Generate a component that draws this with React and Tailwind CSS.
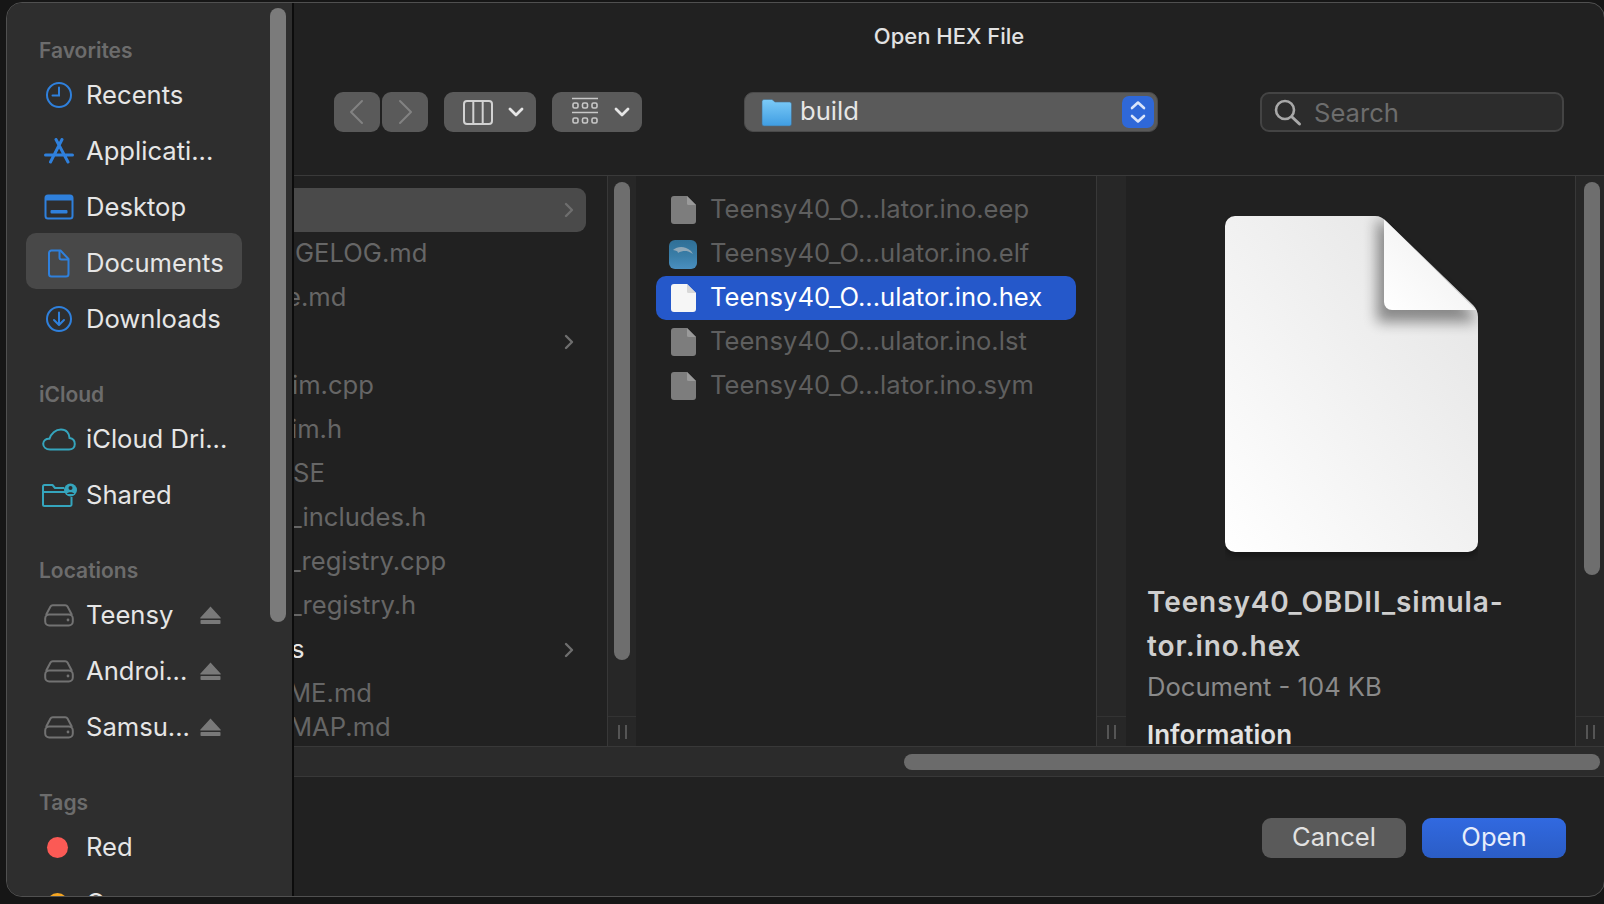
import React from "react";

const BLUE = "#2f80dc";
const TEAL = "#35a5bd";
const GRAY = "#727272";

const Clock = () => (
  <svg width="28" height="28" viewBox="0 0 28 28" fill="none" stroke={BLUE} strokeWidth="2">
    <circle cx="14" cy="14" r="12" />
    <path d="M14 6.5V14.5H7.5" strokeLinecap="round" />
  </svg>
);
const AppStore = () => (
  <svg width="30" height="26" viewBox="0 0 30 26" fill="none" stroke={BLUE} strokeWidth="3" strokeLinecap="round">
    <path d="M12 1.5L24 24M18 1.5L6.5 24M1.5 17H28.5" />
  </svg>
);
const DesktopIcon = () => (
  <svg width="30" height="26" viewBox="0 0 30 26" fill="none" stroke={BLUE} strokeWidth="2">
    <rect x="1.5" y="1.5" width="27" height="23" rx="2.5" />
    <rect x="2" y="2" width="26" height="4.5" fill={BLUE} stroke="none" />
    <rect x="6.5" y="16" width="17" height="3.5" rx="1" fill={BLUE} stroke="none" />
  </svg>
);
const DocIcon = () => (
  <svg width="22" height="29" viewBox="0 0 22 29" fill="none" stroke={BLUE} strokeWidth="2" strokeLinejoin="round">
    <path d="M3.5 1.5H12.5L20.5 10V25a2.5 2.5 0 0 1-2.5 2.5H3.5A2.5 2.5 0 0 1 1 25V4A2.5 2.5 0 0 1 3.5 1.5Z" />
    <path d="M11.5 1.5V8.5a2 2 0 0 0 2 2H20.5" />
  </svg>
);
const DownloadIcon = () => (
  <svg width="28" height="28" viewBox="0 0 28 28" fill="none" stroke={BLUE} strokeWidth="2" strokeLinecap="round" strokeLinejoin="round">
    <circle cx="14" cy="14" r="12" />
    <path d="M14 7.5V19.5M9 15L14 20L19 15" />
  </svg>
);
const CloudIcon = () => (
  <svg width="34" height="23" viewBox="0 0 34 23" fill="none" stroke={TEAL} strokeWidth="2">
    <path d="M8 21.5C4 21.5 1.2 19 1.2 15.8C1.2 12.5 4 10.5 7.5 10.8C9 5.5 13.5 1.5 19 1.5C24.5 1.5 27.5 5.5 27.5 10C31 10.5 32.8 13 32.8 16C32.8 19.2 30.5 21.5 27 21.5Z" />
  </svg>
);
const SharedIcon = () => (
  <svg width="35" height="24" viewBox="0 0 35 24" fill="none" stroke={TEAL} strokeWidth="2" strokeLinejoin="round">
    <path d="M22 5H13L10.5 2H2.5A1.5 1.5 0 0 0 1 3.5V21.5A1.5 1.5 0 0 0 2.5 23H28A1.5 1.5 0 0 0 29.5 21.5V14" />
    <path d="M1 9H24" />
    <circle cx="28.5" cy="7" r="6.5" fill={TEAL} stroke="none" />
    <circle cx="28.5" cy="5" r="2" fill="#2e2e2e" stroke="none" />
    <path d="M24.8 11C25.3 8.8 31.7 8.8 32.2 11Z" fill="#2e2e2e" stroke="none" />
  </svg>
);
const DriveIcon = () => (
  <svg width="30" height="23" viewBox="0 0 30 23" fill="none" stroke={GRAY} strokeWidth="2" strokeLinejoin="round">
    <path d="M2 11L6.5 2.5C7 1.6 7.8 1.2 8.8 1.2H21.2C22.2 1.2 23 1.6 23.5 2.5L28 11" />
    <rect x="1.2" y="10.5" width="27.6" height="11" rx="4" />
    <circle cx="24" cy="16" r="1.4" fill={GRAY} stroke="none" />
  </svg>
);
const Eject = () => (
  <svg width="21" height="18" viewBox="0 0 21 18" fill="#797979">
    <path d="M10.5 0.5L20.5 11.5A.5.5 0 0 1 20 12.5H1A.5.5 0 0 1 .5 11.5Z" />
    <rect x="0.5" y="14" width="20" height="4" rx="0.8" />
  </svg>
);
const Dot = ({ color }) => <span className="block w-[21px] h-[21px] mr-[4px] rounded-full" style={{ background: color }} />;

const sections = [
  {
    title: "Favorites",
    first: true,
    items: [
      { icon: <Clock />, label: "Recents" },
      { icon: <AppStore />, label: "Applicati..." },
      { icon: <DesktopIcon />, label: "Desktop" },
      { icon: <DocIcon />, label: "Documents", active: true },
      { icon: <DownloadIcon />, label: "Downloads" },
    ],
  },
  {
    title: "iCloud",
    items: [
      { icon: <CloudIcon />, label: "iCloud Dri..." },
      { icon: <SharedIcon />, label: "Shared" },
    ],
  },
  {
    title: "Locations",
    items: [
      { icon: <DriveIcon />, label: "Teensy", eject: true },
      { icon: <DriveIcon />, label: "Androi...", eject: true },
      { icon: <DriveIcon />, label: "Samsu...", eject: true },
    ],
  },
  {
    title: "Tags",
    items: [
      { icon: <Dot color="#fb5a55" />, label: "Red" },
      { icon: <Dot color="#f5a623" />, label: "Orange" },
    ],
  },
];

function Sidebar() {
  return (
    <aside className="relative w-[287px] shrink-0 h-full overflow-hidden bg-[#2e2e2e] border-r-2 border-[#0c0c0c] pt-[31px] rounded-l-[15px]">
      {sections.map((s) => (
        <section key={s.title} className={s.first ? "" : "mt-[31px]"}>
          <div className="h-[33px] pl-[32px] flex items-center text-[21px] font-semibold text-[#6c6c6c]">{s.title}</div>
          <ul className="ml-[19px] w-[216px]">
            {s.items.map((it) => (
              <li
                key={it.label}
                className={
                  it.active
                    ? "h-[56px] -mt-[2px] mb-[2px] pt-[4px] flex items-center rounded-[10px] bg-[#484848]"
                    : "h-[56px] flex items-center"
                }
              >
                <span className="w-[36px] ml-[15px] shrink-0 flex justify-center">{it.icon}</span>
                <span className="w-[114px] ml-[9px] shrink-0 whitespace-nowrap text-[25.6px] text-[#e6e6e6]">{it.label}</span>
                {it.eject && <Eject />}
              </li>
            ))}
          </ul>
        </section>
      ))}
      <div className="absolute left-[263px] top-[5px] w-[16px] h-[614px] rounded-full bg-[#7b7b7b]" />
    </aside>
  );
}

const Chevron = ({ d, color = "#d8d8d8", w = 2.6, size = 20 }) => (
  <svg width={size} height={size} viewBox="0 0 20 20" fill="none" stroke={color} strokeWidth={w} strokeLinecap="round" strokeLinejoin="round">
    <path d={d} />
  </svg>
);

const ToolButton = ({ className, children }) => (
  <div className={"h-[40px] rounded-[9px] bg-[#5a5a5a] flex items-center shrink-0 " + className}>{children}</div>
);

function Toolbar() {
  return (
    <header className="h-[173px] shrink-0 border-b border-[#3a3a3a] pt-[19px]">
      <h1 className="h-[28px] leading-[28px] text-center text-[22px] font-medium text-[#e2e2e2]">Open HEX File</h1>
      <div className="mt-[42px] flex h-[40px] pl-[40px]">
        <ToolButton className="w-[46px] justify-center">
          <svg width="18" height="26" viewBox="0 0 18 26" fill="none" stroke="#828282" strokeWidth="2" strokeLinecap="round" strokeLinejoin="round"><path d="M14 2L3 13L14 24" /></svg>
        </ToolButton>
        <ToolButton className="w-[46px] ml-[2px] justify-center">
          <svg width="18" height="26" viewBox="0 0 18 26" fill="none" stroke="#828282" strokeWidth="2" strokeLinecap="round" strokeLinejoin="round"><path d="M4 2L15 13L4 24" /></svg>
        </ToolButton>
        <ToolButton className="w-[92px] ml-[16px] pl-[19px]">
          <svg width="30" height="25" viewBox="0 0 30 25" fill="none" stroke="#d2d2d2" strokeWidth="2">
            <rect x="1" y="1" width="28" height="23" rx="3" />
            <path d="M10.3 1V24M19.7 1V24" />
          </svg>
          <span className="ml-[13px]"><Chevron d="M4 7L10 13L16 7" color="#e6e6e6" w="2.8" /></span>
        </ToolButton>
        <ToolButton className="w-[90px] ml-[16px] pl-[20px]">
          <svg width="26" height="30" viewBox="0 0 26 30" fill="none" stroke="#c8c8c8" strokeWidth="1.6">
            <path d="M0 1.5H26M0 15.5H26" />
            <rect x="1" y="6" width="5" height="5" rx="1.5" />
            <rect x="10.5" y="6" width="5" height="5" rx="1.5" />
            <rect x="20" y="6" width="5" height="5" rx="1.5" />
            <rect x="1" y="21" width="5" height="5" rx="1.5" />
            <rect x="10.5" y="21" width="5" height="5" rx="1.5" />
            <rect x="20" y="21" width="5" height="5" rx="1.5" />
          </svg>
          <span className="ml-[14px]"><Chevron d="M4 7L10 13L16 7" color="#e6e6e6" w="2.8" /></span>
        </ToolButton>
        <div className="ml-[102px] w-[414px] h-[40px] rounded-[9px] bg-[#5a5a5a] border border-[#4a4a4a] flex items-center pl-[16px] pr-[3px] shrink-0">
          <svg width="31" height="29" viewBox="0 0 31 29">
            <defs>
              <linearGradient id="fold" x1="0" y1="0" x2="0" y2="1">
                <stop offset="0" stopColor="#7ccbf8" />
                <stop offset="1" stopColor="#3f9de2" />
              </linearGradient>
            </defs>
            <path d="M1 3.5A2 2 0 0 1 3 1.5H11L14 4H28.5A2 2 0 0 1 30.5 6V26A2 2 0 0 1 28.5 28H3A2 2 0 0 1 1 26Z" fill="url(#fold)" stroke="#4a6c86" strokeWidth="0.6" />
          </svg>
          <span className="ml-[8px] text-[25.6px] leading-[34px] text-[#e6e6e6] -mt-[2px]">build</span>
          <div className="ml-auto w-[32px] h-[32px] rounded-[7px] bg-[#2f68d8] flex items-center justify-center">
            <svg width="20" height="26" viewBox="0 0 20 26" fill="none" stroke="#d9e4fa" strokeWidth="2.6" strokeLinecap="round" strokeLinejoin="round">
              <path d="M4 9L10 3.5L16 9M4 17L10 22.5L16 17" />
            </svg>
          </div>
        </div>
        <div className="ml-[102px] w-[304px] h-[40px] rounded-[9px] bg-[#2c2c2c] border-2 border-[#444444] flex items-center pl-[11px] shrink-0">
          <svg width="29" height="29" viewBox="0 0 29 29" fill="none" stroke="#a8a8a8" strokeWidth="2.6" strokeLinecap="round">
            <circle cx="12" cy="12" r="9" />
            <path d="M19 19L26.5 26" strokeWidth="3" />
          </svg>
          <span className="ml-[12px] mt-[2px] text-[25.6px] leading-[34px] text-[#6d6d6d]">Search</span>
        </div>
      </div>
    </header>
  );
}

const ColChevron = () => (
  <svg width="12" height="18" viewBox="0 0 12 18" fill="none" stroke="#6e6e6e" strokeWidth="2.4" strokeLinecap="round" strokeLinejoin="round">
    <path d="M3 3L9 9L3 15" />
  </svg>
);

const firstColumn = [
  { text: "", selected: true, chevron: true },
  { text: "GELOG.md", cut: "ml-[1px]" },
  { text: "e.md", cut: "-ml-[8px]" },
  { text: "", chevron: true },
  { text: "im.cpp", cut: "-ml-[2px]" },
  { text: "im.h", cut: "-ml-[3px]" },
  { text: "SE", cut: "-ml-[1px]" },
  { text: "_includes.h", cut: "-ml-[4px]" },
  { text: "_registry.cpp", cut: "-ml-[5px]" },
  { text: "_registry.h", cut: "-ml-[4px]" },
  { text: "s", bright: true, chevron: true, cut: "-ml-[3px]" },
  { text: "ME.md", cut: "-ml-[6px]" },
  { text: "MAP.md", tight: true, cut: "-ml-[5px]" },
];

const Handle = () => (
  <div className="h-[30px] border-t border-[#333333] flex justify-center items-center gap-[5px] shrink-0">
    <span className="w-[2px] h-[14px] bg-[#555555]" />
    <span className="w-[2px] h-[14px] bg-[#555555]" />
  </div>
);

const Track = ({ width, thumb }) => (
  <div className={"shrink-0 h-full bg-[#272727] border-l border-[#383838] flex flex-col " + width}>
    <div className="flex-1 pt-[6px]">
      {thumb}
    </div>
    <Handle />
  </div>
);

function SmallDoc({ color = "#7d7d7d", fold = "#9a9a9a" }) {
  return (
    <svg width="25" height="28" viewBox="0 0 25 28">
      <path d="M3 0H16L25 9V25A3 3 0 0 1 22 28H3A3 3 0 0 1 0 25V3A3 3 0 0 1 3 0Z" fill={color} />
      <path d="M16 0L25 9H17.5A1.5 1.5 0 0 1 16 7.5Z" fill={fold} />
    </svg>
  );
}

const ElfIcon = () => (
  <svg width="28" height="29" viewBox="0 0 28 29">
    <defs>
      <linearGradient id="elf" x1="0" y1="0" x2="0" y2="1">
        <stop offset="0" stopColor="#2f6f96" />
        <stop offset="0.55" stopColor="#3a7ea8" />
        <stop offset="1" stopColor="#4a8fc0" />
      </linearGradient>
    </defs>
    <rect width="28" height="29" rx="6" fill="url(#elf)" />
    <path d="M4 10C9 6 16 6 22 11L24 14C20 11.5 18 11 16 11C14 11 11 11.5 9 13C9 11 7 10.5 4 10Z" fill="#8fa8b8" />
  </svg>
);

const files = [
  { name: "Teensy40_O...lator.ino.eep", icon: <SmallDoc /> },
  { name: "Teensy40_O...ulator.ino.elf", icon: <ElfIcon /> },
  { name: "Teensy40_O...ulator.ino.hex", icon: <SmallDoc color="#f6f6f6" fold="#d8d8d8" />, selected: true },
  { name: "Teensy40_O...ulator.ino.lst", icon: <SmallDoc /> },
  { name: "Teensy40_O...lator.ino.sym", icon: <SmallDoc /> },
];

const SHEET = "M10 0H150C155 0 158 2 161 5L248 89C251 92 253 96 253 101V326A10 10 0 0 1 243 336H10A10 10 0 0 1 0 326V10A10 10 0 0 1 10 0Z";

function BigDoc() {
  return (
    <svg width="253" height="345" viewBox="0 0 253 345" className="block">
      <defs>
        <linearGradient id="paper" x1="1" y1="0" x2="0" y2="1">
          <stop offset="0" stopColor="#e3e3e3" />
          <stop offset="1" stopColor="#ffffff" />
        </linearGradient>
        <linearGradient id="flap" x1="0" y1="1" x2="1" y2="0">
          <stop offset="0" stopColor="#ffffff" />
          <stop offset="0.6" stopColor="#f4f4f4" />
          <stop offset="1" stopColor="#d8d8d8" />
        </linearGradient>
        <filter id="soft" x="-40%" y="-40%" width="180%" height="180%">
          <feGaussianBlur stdDeviation="7" />
        </filter>
        <filter id="under" x="-10%" y="-10%" width="120%" height="120%">
          <feGaussianBlur stdDeviation="3" />
        </filter>
        <clipPath id="sheet">
          <path d={SHEET} />
        </clipPath>
      </defs>
      <path d={SHEET} transform="translate(0 4)" fill="#000000" opacity="0.35" filter="url(#under)" />
      <path d={SHEET} fill="url(#paper)" />
      <g clipPath="url(#sheet)">
        <path d="M152 4H159L250 100V106H152Z" fill="#000000" opacity="0.42" filter="url(#soft)" />
        <path d="M159 3L251 94H167A8 8 0 0 1 159 86Z" fill="url(#flap)" />
      </g>
    </svg>
  );
}

export default function App() {
  return (
    <div className="w-[1604px] h-[904px] overflow-hidden bg-[#161616] pl-[6px] pt-[2px] pb-[7px] antialiased [font-family:Inter,'Liberation_Sans',sans-serif]">
      <div className="w-[1599px] h-full flex overflow-hidden rounded-[16px] border border-[#505050] bg-[#212121]">
        <Sidebar />
        <main className="flex-1 min-w-0 flex flex-col">
          <Toolbar />
          <div className="h-[570px] shrink-0 flex overflow-hidden">
            <div className="w-[313px] shrink-0 pt-[12px] overflow-hidden">
              {firstColumn.map((r, i) => (
                <div
                  key={i}
                  className={
                    "h-[44px] mr-[21px] pr-[11px] flex items-center justify-between rounded-r-[9px] " +
                    (r.selected ? "bg-[#4a4a4a] " : "") +
                    (r.tight ? "-mt-[10px] " : "")
                  }
                >
                  <span className={"text-[25.6px] pb-[2px] whitespace-nowrap " + (r.cut || "") + " " + (r.bright ? "text-[#e6e6e6]" : "text-[#666666]")}>{r.text}</span>
                  {r.chevron && <ColChevron />}
                </div>
              ))}
            </div>
            <Track width="w-[29px]" thumb={<div className="w-[16px] h-[478px] mx-auto rounded-full bg-[#6e6e6e]" />} />
            <div className="w-[460px] shrink-0 pt-[12px]">
              {files.map((f) => (
                <div
                  key={f.name}
                  className={
                    "h-[44px] ml-[20px] w-[420px] pl-[13px] flex items-center rounded-[10px] " +
                    (f.selected ? "bg-[#2558ca]" : "")
                  }
                >
                  <span className="w-[28px] shrink-0 flex justify-center">{f.icon}</span>
                  <span className={"ml-[13px] pb-[2px] text-[25.6px] whitespace-nowrap " + (f.selected ? "text-white" : "text-[#5f5f5f]")}>{f.name}</span>
                </div>
              ))}
            </div>
            <Track width="w-[30px]" thumb={null} />
            <div className="flex-1 min-w-0 overflow-hidden">
              <div className="pt-[40px] pl-[99px]"><BigDoc /></div>
              <div className="pl-[21px] -mt-[9px]">
                <p className="mt-[28px] text-[28px] tracking-[0.9px] leading-[44px] font-semibold text-[#cfcfcf] whitespace-nowrap">
                  Teensy40_OBDII_simula-<br />tor.ino.hex
                </p>
                <p className="h-[38px] leading-[38px] text-[25.6px] text-[#8a8a8a]">Document - 104 KB</p>
                <p className="mt-[9px] h-[40px] leading-[40px] text-[26px] font-semibold text-[#e2e2e2]">Information</p>
              </div>
            </div>
            <Track width="w-[29px]" thumb={<div className="w-[16px] h-[393px] ml-[8px] rounded-full bg-[#6e6e6e]" />} />
          </div>
          <div className="h-[31px] shrink-0 bg-[#2b2b2b] border-y border-[#383838] pl-[610px] pr-[4px] flex items-center">
            <div className="h-[16px] w-full rounded-full bg-[#6b6b6b]" />
          </div>
          <footer className="flex-1 flex justify-end items-start pt-[41px] pr-[38px] gap-[16px]">
            <button className="w-[144px] h-[40px] rounded-[9px] bg-[#5a5a5a] text-[25.6px] leading-[36px] pb-[2px] text-[#e2e2e2]">Cancel</button>
            <button className="w-[144px] h-[40px] rounded-[9px] bg-gradient-to-b from-[#3169e0] to-[#2b5dc6] text-[25.6px] leading-[36px] pb-[2px] text-[#e6edfb]">Open</button>
          </footer>
        </main>
      </div>
    </div>
  );
}
